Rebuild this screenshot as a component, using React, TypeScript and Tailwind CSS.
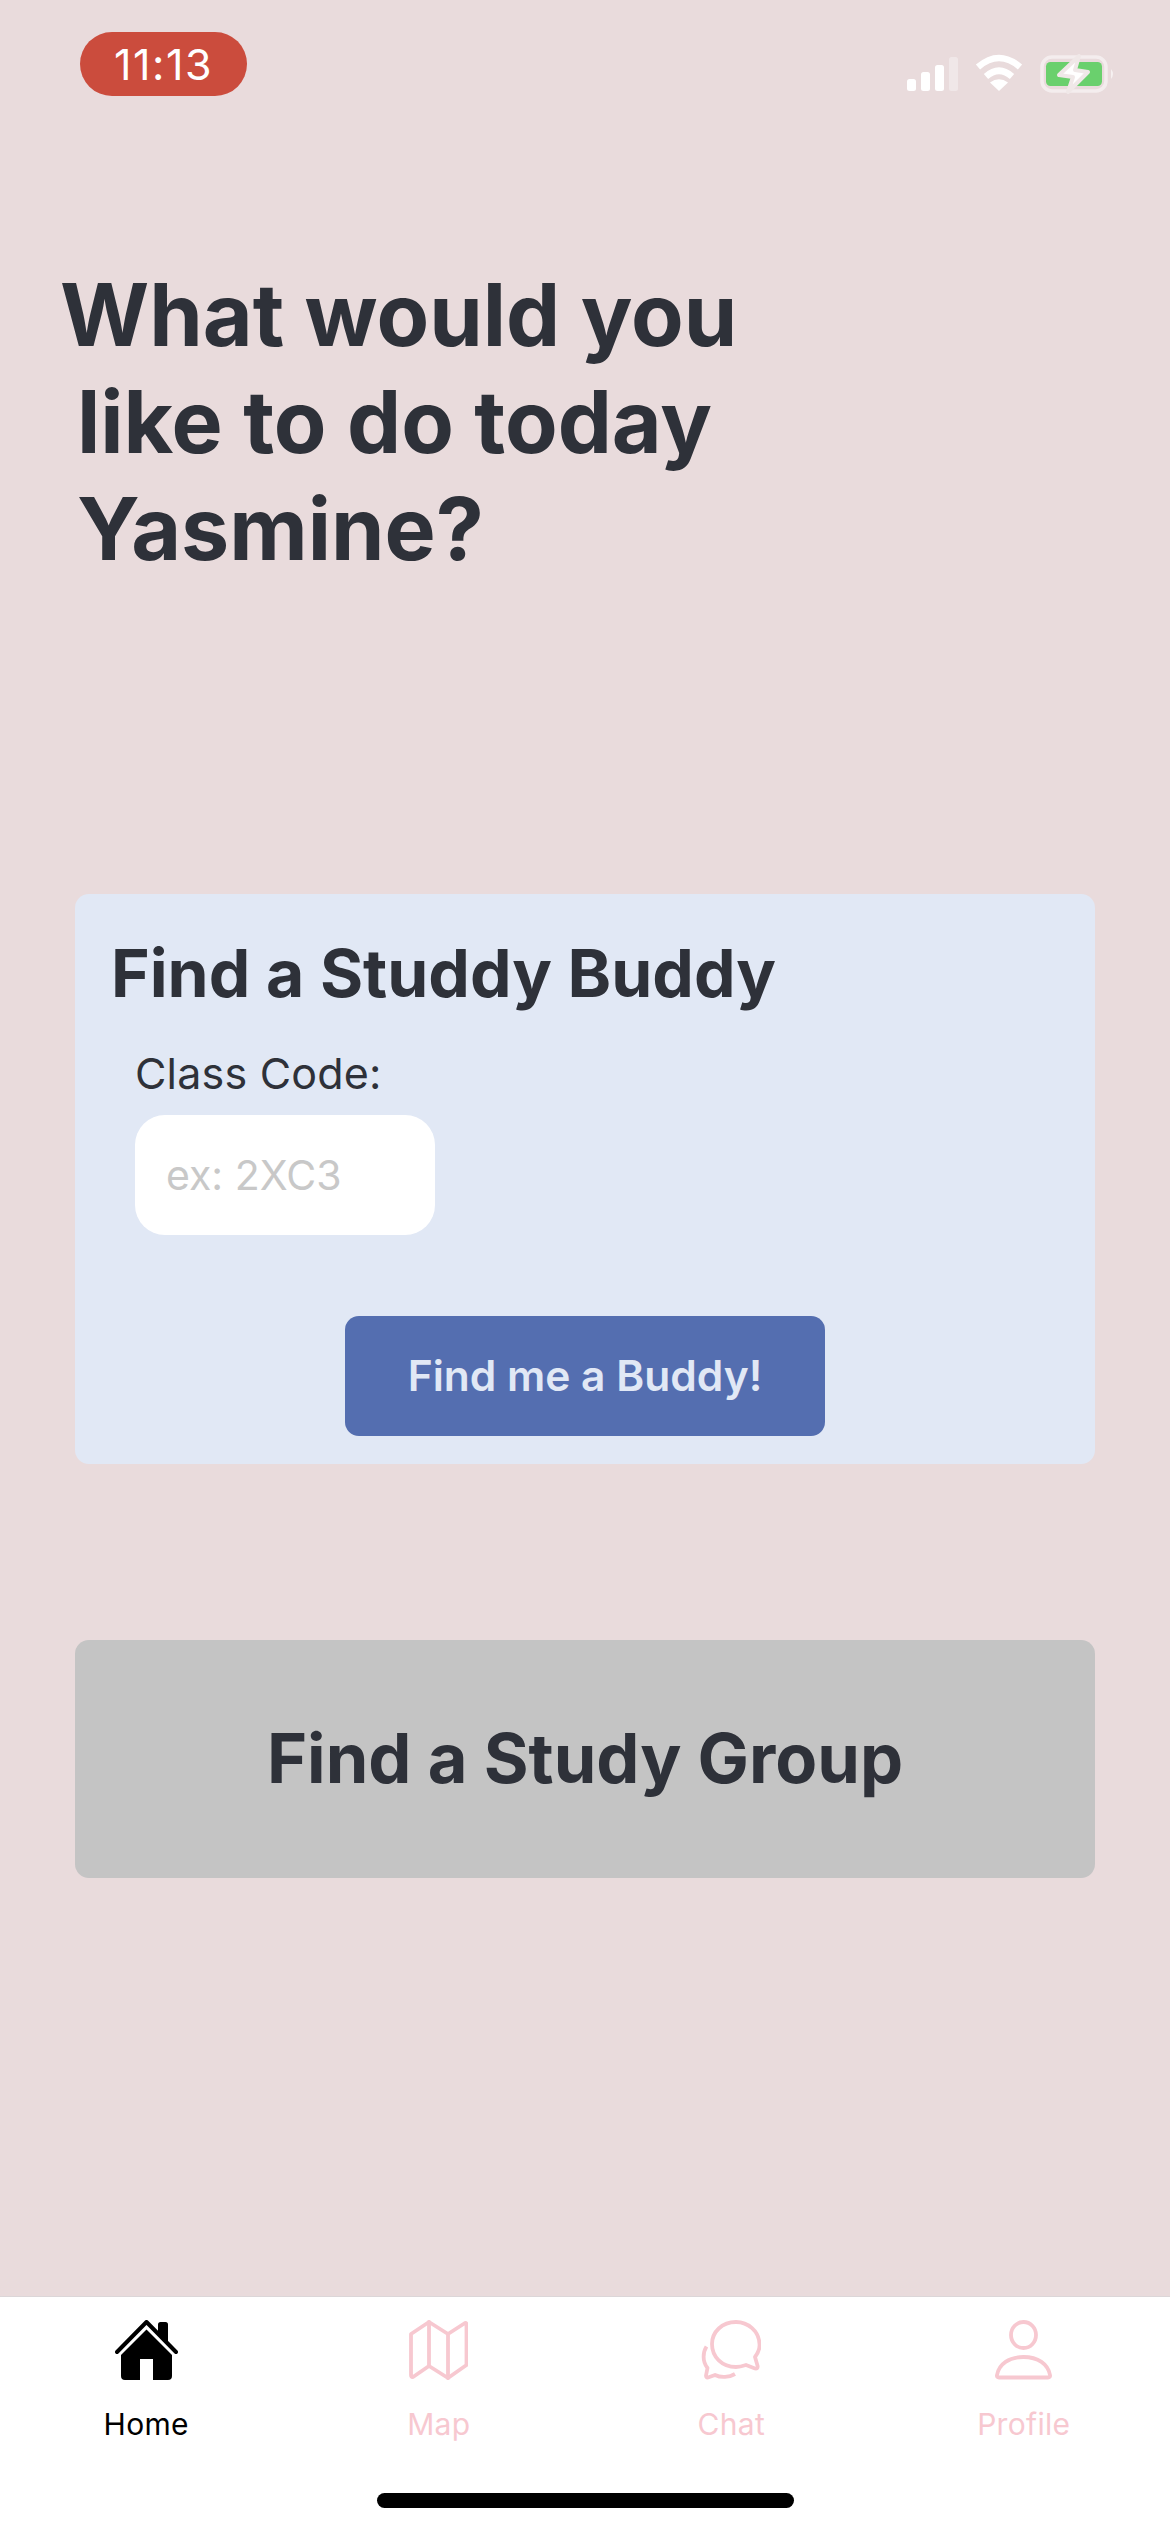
const pink = "#f7c8d0";

function StatusIcons() {
  return (
    <svg width="300" height="80" viewBox="0 0 300 80" className="block">
      <rect x="37" y="49" width="9" height="12" rx="2.5" fill="#fff" />
      <rect x="51" y="42" width="9" height="19" rx="2.5" fill="#fff" />
      <rect x="65" y="35" width="9" height="26" rx="2.5" fill="#fff" />
      <rect x="79" y="27" width="9" height="34" rx="2.5" fill="#fff" opacity="0.35" />
      <path d="M108 37Q129 19 150 37" fill="none" stroke="#fff" strokeWidth="6.5" />
      <path d="M116 46.500Q129 35 142 46.500" fill="none" stroke="#fff" strokeWidth="6.5" />
      <path d="M129 61L120 52.500Q129 46 138 52.500Z" fill="#fff" />
      <rect x="172" y="27" width="64" height="34" rx="10" fill="none" stroke="#fff" strokeOpacity="0.5" strokeWidth="3.500" />
      <rect x="176" y="32" width="56" height="24" rx="4.500" fill="#6ad06d" />
      <path d="M241 39Q245 44 241 49Z" fill="#fff" fillOpacity="0.6" />
      <path d="M209 26L189 45L203 47L198 62L218 42L205 40Z" fill="#fff" stroke="#f0e8e8" strokeWidth="4" strokeLinejoin="round" />
    </svg>
  );
}

function HomeIcon() {
  return (
    <svg width="63" height="60" viewBox="0 0 63 60" className="block">
      <path d="M43 12V4.500a2.500 2.500 0 0 1 2.500-2.500h5a2.500 2.500 0 0 1 2.500 2.500V23Z" fill="#000" />
      <path d="M2 32L31.500 2L61 32" fill="none" stroke="#000" strokeWidth="4" strokeLinecap="round" strokeLinejoin="round" />
      <path d="M31.500 9.500L57 35V56a4 4 0 0 1-4 4H38V39H25V60H10a4 4 0 0 1-4-4V35Z" fill="#000" />
    </svg>
  );
}

function MapIcon() {
  return (
    <svg width="59" height="60" viewBox="0 0 59 60" fill="none" stroke={pink} strokeWidth="3.800" strokeLinejoin="round" strokeLinecap="round" className="block">
      <path d="M20 2L39 14L56 3Q57.500 2.500 57.500 5V45L39 58L20 46L4 57Q2 57.500 2 55V14Z" />
      <path d="M20 2V46M39 14V58" />
    </svg>
  );
}

function ChatIcon() {
  return (
    <svg width="60" height="60" viewBox="0 0 60 60" fill="none" stroke={pink} strokeWidth="3.800" strokeLinejoin="round" className="block">
      <path d="M54 37C57 33 59 29 58.500 24C58 11 47 2 35 2C21 2 11 12 11 24C11 37 21 47 35 47C38 47 42 46 45 45L54 48.500Q57 49 56.600 46Z" />
      <path d="M5.500 26.500C2 32 1 41 6.500 48L5 55.500Q5 58 7 57.500L14 55C20 58 28 57.500 34 54" />
    </svg>
  );
}

function ProfileIcon() {
  return (
    <svg width="57" height="60" viewBox="0 0 57 60" fill="none" stroke={pink} strokeWidth="3.800" strokeLinejoin="round" className="block">
      <ellipse cx="28.500" cy="15" rx="12.500" ry="13" />
      <path d="M4 57.500H53Q55.500 57.500 55 55C53 44 43 37 28.500 37C14 37 4 44 2 55Q1.500 57.500 4 57.500Z" />
    </svg>
  );
}

function Tab({ label, active, children }: { label: string; active?: boolean; children: React.ReactNode }) {
  return (
    <div className="flex flex-col items-center">
      <div className="h-[60px] flex items-center justify-center">{children}</div>
      <span className={active ? "mt-[27px] text-[30px] leading-[34px] tracking-[0.3px] text-black" : "mt-[27px] text-[30px] leading-[34px] tracking-[0.3px] text-[#f7c8d0]"}>{label}</span>
    </div>
  );
}

export default function App() {
  return (
    <div className="w-[1170px] h-[2532px] flex flex-col bg-[#e9dbdc] text-[#2e3139] font-['Inter',sans-serif]">
      <div className="flex items-start justify-between h-[110px]">
        <div className="ml-[80px] mt-[32px] w-[167px] h-[64px] rounded-[32px] bg-[#cb4c3d] flex items-center justify-center text-white text-[43px] tracking-[1.5px] leading-none">11:13</div>
        <div className="mt-[30px]"><StatusIcons /></div>
      </div>
      <h1 className="mt-[152px] text-[86px] leading-[107px] font-bold">
        <div className="pl-[60px]">What would you</div>
        <div className="pl-[77px]">like to do today</div>
        <div className="pl-[77px]">Yasmine?</div>
      </h1>
      <section className="mt-[311px] mx-[75px] h-[570px] rounded-[14px] bg-[#e1e8f5] flex flex-col">
        <h2 className="mt-[39px] ml-[36px] text-[66px] leading-[80px] font-bold">Find a Studdy Buddy</h2>
        <label className="mt-[34px] ml-[60px] text-[43px] leading-[52px] tracking-[0.2px]">Class Code:</label>
        <input readOnly placeholder="ex: 2XC3" className="mt-[16px] ml-[60px] w-[300px] h-[120px] rounded-[30px] bg-white px-[31px] text-[41px] placeholder:text-[#c8c8c8] outline-none" />
        <button className="mt-[81px] mx-auto w-[480px] h-[120px] rounded-[14px] bg-[#546eb0] text-[#e1e8f5] text-[42.500px] font-semibold">Find me a Buddy!</button>
      </section>
      <section className="mt-[176px] mx-[75px] h-[238px] rounded-[14px] bg-[#c4c4c4] flex items-center justify-center">
        <h2 className="text-[68.500px] font-bold">Find a Study Group</h2>
      </section>
      <nav className="mt-auto h-[236px] bg-white border-t border-[#dcd6d8] flex flex-col">
        <div className="grid grid-cols-4 pt-[23px]">
          <Tab label="Home" active><HomeIcon /></Tab>
          <Tab label="Map"><MapIcon /></Tab>
          <Tab label="Chat"><ChatIcon /></Tab>
          <Tab label="Profile"><ProfileIcon /></Tab>
        </div>
        <div className="mt-auto mb-[24px] mx-auto w-[417px] h-[15px] rounded-full bg-black" />
      </nav>
    </div>
  );
}
